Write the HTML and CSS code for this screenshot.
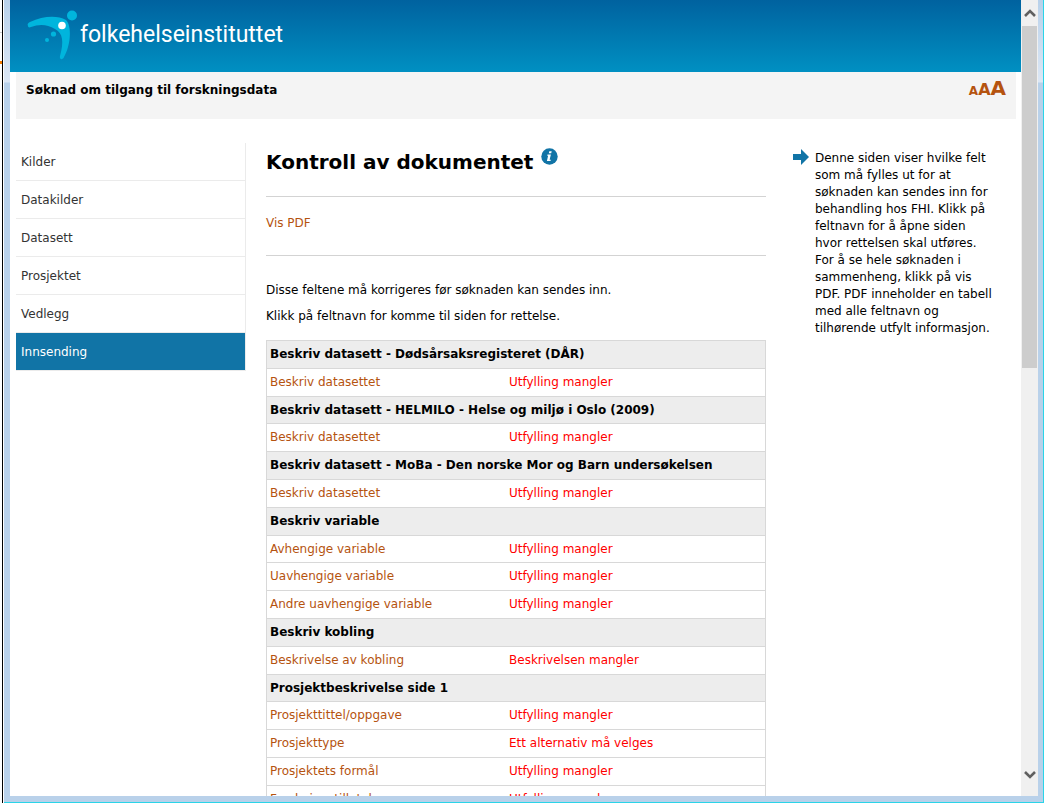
FILE: index.html
```html
<!DOCTYPE html>
<html lang="nb">
<head>
<meta charset="utf-8">
<title>Kontroll av dokumentet</title>
<link rel="stylesheet" href="styles.css">
</head>
<body>
<div class="edge"></div>
<div class="window">
  <div class="viewport">
    <div class="page">
      <header class="banner">
        <a class="logo" href="#">
          <svg width="52" height="50" viewBox="0 0 52 50" aria-hidden="true">
            <path fill="#00b5dd" d="M2 16C1 14 2 13 4 12C17 6 31 5 40 10C46 16 45 35 38 47C37 50 33 50 34 46C38 32 37 23 29 19C21 14 13 14 5 17C3 18 2 17 2 16Z"/>
            <circle cx="46" cy="5.500" r="5" fill="#00b5dd"/>
            <circle cx="36" cy="15.500" r="3.800" fill="#fff"/>
            <circle cx="27.500" cy="24" r="2.600" fill="#00b5dd"/>
            <circle cx="21" cy="30" r="2" fill="#00b5dd"/>
          </svg>
          <span>folkehelseinstituttet</span>
        </a>
      </header>
      <div class="titlebar">
        <strong>Søknad om tilgang til forskningsdata</strong>
        <div class="sizes">
          <button class="size-s" aria-label="Liten tekst">A</button><button class="size-m" aria-label="Middels tekst">A</button><button class="size-l" aria-label="Stor tekst">A</button>
        </div>
      </div>
      <div class="columns">
        <nav class="menu">
          <a href="#">Kilder</a>
          <a href="#">Datakilder</a>
          <a href="#">Datasett</a>
          <a href="#">Prosjektet</a>
          <a href="#">Vedlegg</a>
          <a class="active" href="#">Innsending</a>
        </nav>
        <main>
          <div class="heading">
            <h1>Kontroll av dokumentet</h1>
            <svg width="17" height="17" viewBox="0 0 17 17" role="img" aria-label="Informasjon">
              <circle cx="8.500" cy="8.500" r="8.200" fill="#1174a6"/>
              <path fill="#fff" d="M8.300 3.200h2.400l-.5 2.100H7.800zM6.500 6.500h3.400l-1.300 5.300h1.200l-.3 1.200H5.900l1.200-5.300H6.200z"/>
            </svg>
          </div>
          <div class="pdf"><a href="#">Vis PDF</a></div>
          <p>Disse feltene må korrigeres før søknaden kan sendes inn.</p>
          <p>Klikk på feltnavn for komme til siden for rettelse.</p>
          <table>
            <tr><th colspan="2">Beskriv datasett - Dødsårsaksregisteret (DÅR)</th></tr>
            <tr><td><a href="#">Beskriv datasettet</a></td><td>Utfylling mangler</td></tr>
            <tr><th colspan="2">Beskriv datasett - HELMILO - Helse og miljø i Oslo (2009)</th></tr>
            <tr><td><a href="#">Beskriv datasettet</a></td><td>Utfylling mangler</td></tr>
            <tr><th colspan="2">Beskriv datasett - MoBa - Den norske Mor og Barn undersøkelsen</th></tr>
            <tr><td><a href="#">Beskriv datasettet</a></td><td>Utfylling mangler</td></tr>
            <tr><th colspan="2">Beskriv variable</th></tr>
            <tr><td><a href="#">Avhengige variable</a></td><td>Utfylling mangler</td></tr>
            <tr><td><a href="#">Uavhengige variable</a></td><td>Utfylling mangler</td></tr>
            <tr><td><a href="#">Andre uavhengige variable</a></td><td>Utfylling mangler</td></tr>
            <tr><th colspan="2">Beskriv kobling</th></tr>
            <tr><td><a href="#">Beskrivelse av kobling</a></td><td>Beskrivelsen mangler</td></tr>
            <tr><th colspan="2">Prosjektbeskrivelse side 1</th></tr>
            <tr><td><a href="#">Prosjekttittel/oppgave</a></td><td>Utfylling mangler</td></tr>
            <tr><td><a href="#">Prosjekttype</a></td><td>Ett alternativ må velges</td></tr>
            <tr><td><a href="#">Prosjektets formål</a></td><td>Utfylling mangler</td></tr>
            <tr><td><a href="#">Forskningstillatelse</a></td><td>Utfylling mangler</td></tr>
          </table>
        </main>
        <aside>
          <svg width="16" height="16" viewBox="0 0 16 16" aria-hidden="true"><path fill="#1174a6" d="M0 5h8V0l8 8-8 8v-5H0z"/></svg>
          <div>Denne siden viser hvilke felt som må fylles ut for at søknaden kan sendes inn for behandling hos FHI. Klikk på feltnavn for å åpne siden hvor rettelsen skal utføres. For å se hele søknaden i sammenheng, klikk på vis PDF. PDF inneholder en tabell med alle feltnavn og tilhørende utfylt informasjon.</div>
        </aside>
      </div>
    </div>
    <div class="scrollbar">
      <button aria-label="Rull opp"><svg width="12" height="8" viewBox="0 0 12 8"><path d="M1 7l5-5 5 5" fill="none" stroke="#606060" stroke-width="2.600"/></svg></button>
      <div class="track"><div class="thumb"></div></div>
      <button aria-label="Rull ned"><svg width="12" height="8" viewBox="0 0 12 8"><path d="M1 1l5 5 5-5" fill="none" stroke="#606060" stroke-width="2.600"/></svg></button>
    </div>
  </div>
</div>
</body>
</html>
```
FILE: styles.css
```css
* { box-sizing: border-box; }
body {
  margin: 0;
  height: 100vh;
  display: flex;
  overflow: hidden;
  background: #fff;
  color: #000;
  font: 12px/17px Verdana, "DejaVu Sans", sans-serif;
}
a { color: #b5530f; text-decoration: none; }
button { border: 0; padding: 0; background: none; font-family: inherit; cursor: pointer; }
svg { display: block; flex: none; }

.edge {
  flex: none;
  width: 3px;
  margin-right: 1px;
  border-right: 1px solid #000;
  background:
    linear-gradient(#ccc, #ccc) 0 32px / 2px 1px no-repeat,
    linear-gradient(#f57c00, #f57c00) 0 61px / 2px 3px no-repeat;
}
.window {
  flex: 1;
  min-width: 0;
  margin-right: 1px;
  padding: 0 5px 6px 6px;
  border-right: 1px solid #2ad4e8;
  border-bottom: 1px solid #2ad4e8;
  background: linear-gradient(#b9d1ea, #dce7f5 82px, #b9d1ea 83px);
}
.viewport { display: flex; height: 100%; overflow: hidden; background: #fff; }
.page { flex: 1; min-width: 0; }

.banner {
  height: 72px;
  padding: 10px 16px;
  background: linear-gradient(#00629f, #0090c2);
}
.logo { display: inline-flex; gap: 2px; color: #fff; font: 23px/50px Roboto, sans-serif; }
.titlebar {
  display: flex;
  justify-content: space-between;
  height: 47px;
  margin: 0 5px 0 6px;
  padding: 10px 10px 0;
  background: #f4f4f4;
}
.sizes { display: flex; align-items: baseline; height: 24px; margin-top: -6px; }
.sizes button { color: #b5530f; font-weight: bold; line-height: 24px; }
.size-s { font-size: 12px; }
.size-m { font-size: 16px; }
.size-l { font-size: 20px; }

.columns {
  display: grid;
  grid-template-columns: 23% 50% 1fr;
  gap: 20px;
  margin: 24px 5px 0 6px;
}
.menu {
  align-self: start;
  border-right: 1px solid #ebebeb;
}
.menu a {
  display: block;
  height: 38px;
  padding: 0 5px;
  border-bottom: 1px solid #ebebeb;
  color: #333;
  line-height: 38px;
}
.menu .active { background: #1174a6; color: #fff; }

.heading { display: flex; gap: 8px; padding: 5px 0 20px; }
h1 { margin: 0; font-size: 20px; line-height: 28px; }
.pdf {
  height: 60px;
  margin-bottom: 26px;
  padding-top: 18px;
  border: solid #d3d3d3;
  border-width: 1px 0;
}
p { margin: 0 0 9px; }
table { width: 100%; margin-top: 15px; border: 1px solid #d8d8d8; border-collapse: collapse; }
tr { height: 28px; border-bottom: 1px solid #d8d8d8; }
tr:nth-child(5n+3) { height: 27px; }
th { padding: 0 3px; background: #ededed; text-align: left; }
td { width: 52%; padding: 0 3px; color: #f00; }
td:first-child { width: 48%; }

aside { display: flex; gap: 6px; padding: 7px 21px 0 7px; }
aside svg { margin-top: -1px; }

.scrollbar { display: flex; flex-direction: column; flex: none; width: 17px; background: #f0f0f0; }
.scrollbar button { display: flex; justify-content: center; align-items: center; height: 26px; }
.scrollbar button:last-child { height: 43px; }
.track { flex: 1; padding: 0 1px; }
.thumb { height: 47%; background: #cdcdcd; }
```
